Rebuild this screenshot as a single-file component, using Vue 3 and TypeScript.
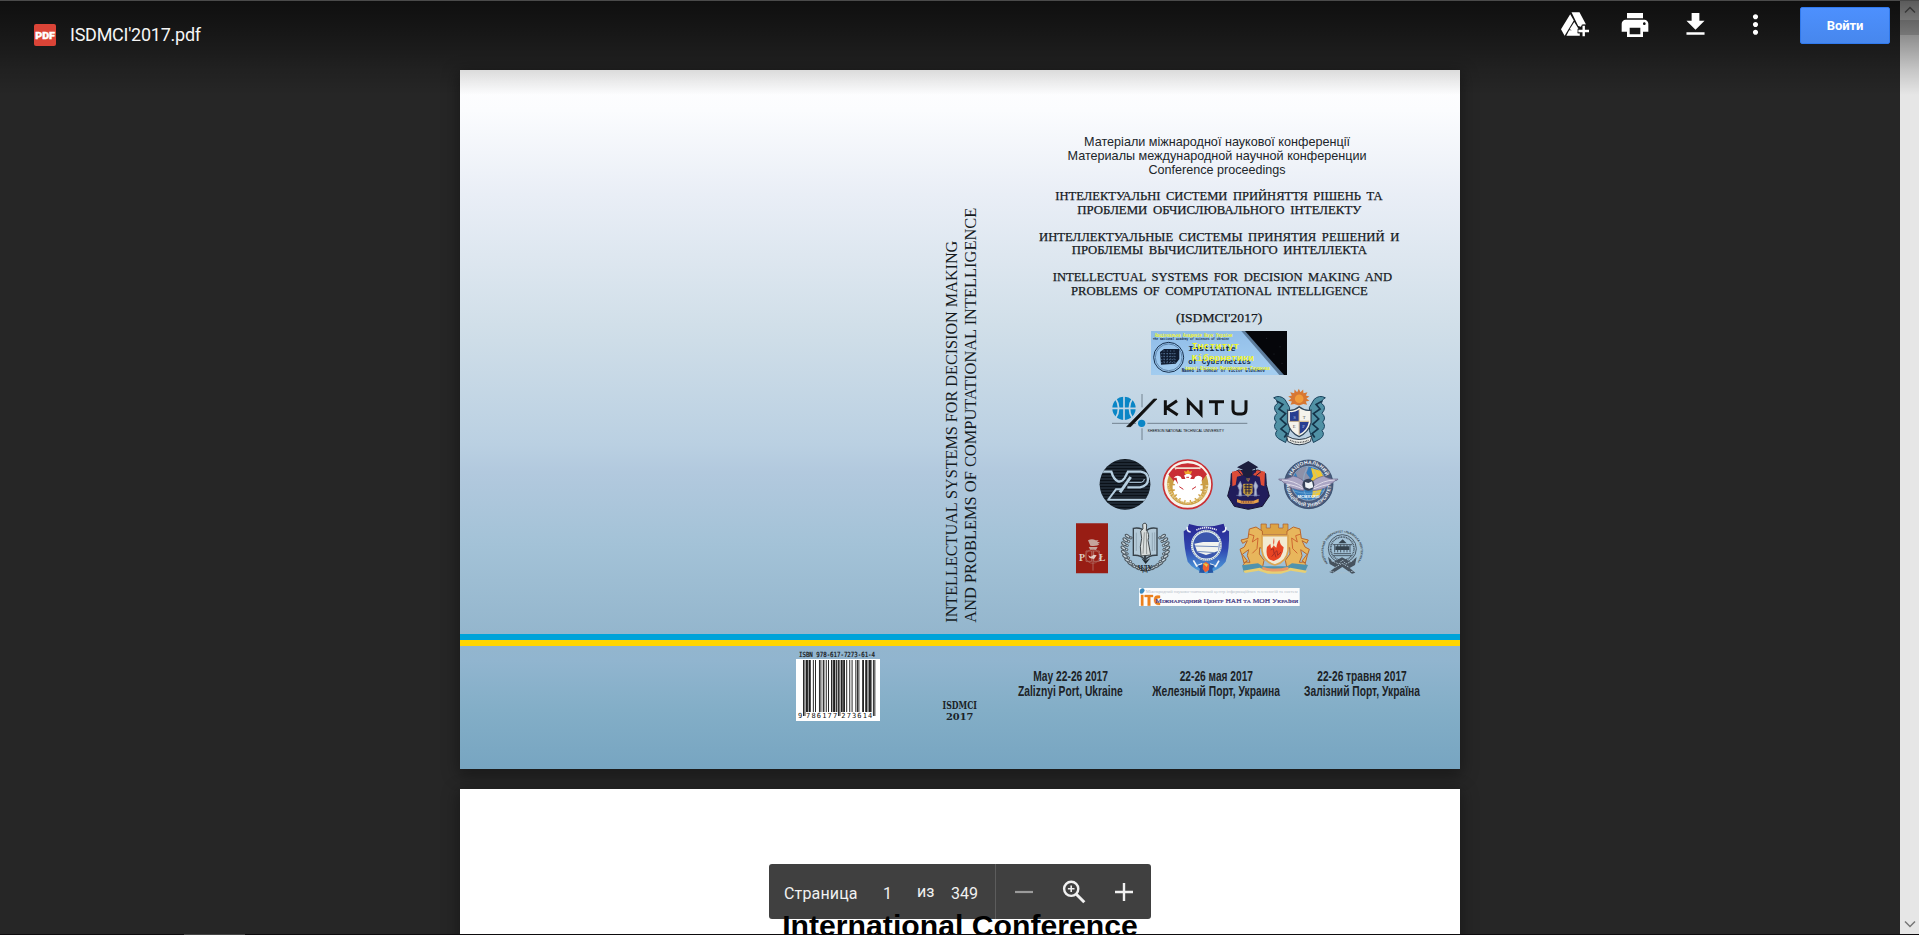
<script setup lang="ts">
interface Line { t: string; x: number; w: number; y: number }

const subtitle: Line[] = [
  { t: 'Матеріали міжнародної наукової конференції', x: 1084, w: 266, y: 146.2 },
  { t: 'Материалы международной научной конференции', x: 1067.5, w: 299, y: 160.2 },
  { t: 'Conference proceedings', x: 1148.5, w: 137, y: 174.2 },
]
const titles: Line[] = [
  { t: 'ІНТЕЛЕКТУАЛЬНІ СИСТЕМИ ПРИЙНЯТТЯ РІШЕНЬ ТА', x: 1055.3, w: 327.4, y: 200.2 },
  { t: 'ПРОБЛЕМИ ОБЧИСЛЮВАЛЬНОГО ІНТЕЛЕКТУ', x: 1077.3, w: 284, y: 213.7 },
  { t: 'ИНТЕЛЛЕКТУАЛЬНЫЕ СИСТЕМЫ ПРИНЯТИЯ РЕШЕНИЙ И', x: 1039, w: 360.3, y: 240.7 },
  { t: 'ПРОБЛЕМЫ ВЫЧИСЛИТЕЛЬНОГО ИНТЕЛЛЕКТА', x: 1071.7, w: 295.3, y: 254 },
  { t: 'INTELLECTUAL SYSTEMS FOR DECISION MAKING AND', x: 1052.7, w: 339.3, y: 281 },
  { t: 'PROBLEMS OF COMPUTATIONAL INTELLIGENCE', x: 1071, w: 296.7, y: 294.5 },
  { t: "(ISDMCI'2017)", x: 1176, w: 86.3, y: 321.5 },
]
const dates: Line[] = [
  { t: 'May 22-26 2017', x: 1033.3, w: 74.7, y: 680.7 },
  { t: 'Zaliznyi Port, Ukraine', x: 1018, w: 104.7, y: 696 },
  { t: '22-26 мая 2017', x: 1179.7, w: 73.3, y: 680.7 },
  { t: 'Железный Порт, Украина', x: 1152.3, w: 127.7, y: 696 },
  { t: '22-26 травня 2017', x: 1317.3, w: 89.4, y: 680.7 },
  { t: 'Залізний Порт, Україна', x: 1304, w: 116, y: 696 },
]

// EAN-13 encoding of the ISBN
const isbn = '9786177273614'
const L = ['0001101', '0011001', '0010011', '0111101', '0100011', '0110001', '0101111', '0111011', '0110111', '0001011']
const right = (d: number) => L[d].replace(/[01]/g, c => (c === '0' ? '1' : '0'))
const even = (d: number) => right(d).split('').reverse().join('')
const parity = 'OEEOEO'
const digits = isbn.split('').map(Number)
const modules = '101'
  + digits.slice(1, 7).map((d, i) => (parity[i] === 'O' ? L[d] : even(d))).join('')
  + '01010'
  + digits.slice(7).map(right).join('')
  + '101'
const bars: { x: number; h: number }[] = []
modules.split('').forEach((m, i) => {
  if (m === '1') bars.push({ x: 7 + i * 0.76, h: i < 3 || i > 91 || (i > 44 && i < 50) ? 56 : 52 })
})
const gearTeeth = Array.from({ length: 16 }, (_, i) => i * 22.5)
const leaves = Array.from({ length: 11 }, (_, i) => {
  const a = Math.PI * (0.55 + i * 0.065)
  return { x: 256 + Math.cos(a) * 66, y: 115 + Math.sin(a) * 62, m: 256 - Math.cos(a) * 66 }
})
const stripes = Array.from({ length: 17 }, (_, i) => 48 + i * 9)
</script>

<template>
  <div class="viewer">
    <main class="pages">
      <article class="page cover">
        <section class="upper">
          <div class="back"></div>
          <svg class="spine" viewBox="920 70 80 564">
            <text transform="translate(957 622.7) rotate(-90)" textLength="382" lengthAdjust="spacingAndGlyphs">INTELLECTUAL SYSTEMS FOR DECISION MAKING</text>
            <text transform="translate(975.7 622.7) rotate(-90)" textLength="415" lengthAdjust="spacingAndGlyphs">AND PROBLEMS OF COMPUTATIONAL INTELLIGENCE</text>
          </svg>
          <div class="front">
            <svg class="heading" viewBox="1000 70 460 261">
              <text v-for="l in subtitle" :key="l.t" class="sub" :x="l.x" :y="l.y" :textLength="l.w" lengthAdjust="spacingAndGlyphs">{{ l.t }}</text>
              <text v-for="l in titles" :key="l.t" class="ttl" :x="l.x" :y="l.y" :textLength="l.w" lengthAdjust="spacingAndGlyphs">{{ l.t }}</text>
            </svg>

            <svg class="banner" viewBox="213 33 408 132">
              <defs><linearGradient id="sky" x1="0" y1="0" x2="0.25" y2="1"><stop offset="0" stop-color="#8fbce8" /><stop offset="1" stop-color="#a3cdf0" /></linearGradient></defs>
              <path fill="url(#sky)" d="M213 33h408v132H213z" />
              <path fill="#5c7c9c" d="M484 33h20l112 132h-18z" />
              <path fill="#05060a" d="M495 33H621V165H612z" />
              <g fill="#2b3038"><circle cx="560" cy="55" r="1.5" /><circle cx="600" cy="80" r="1.5" /><circle cx="582" cy="102" r="1.5" /><circle cx="606" cy="130" r="1.5" /></g>
              <circle cx="266" cy="112" r="45" fill="none" stroke="#17304e" stroke-width="3" />
              <circle cx="266" cy="112" r="40" fill="none" stroke="#41658c" stroke-width="2" />
              <path fill="#101c30" d="M240 96l12-9h46v30l-11 14-44 3z" />
              <path d="M243 101h48M243 110h48M243 119h48M243 128h44M252 91v40M262 91v40M272 91v40M282 91v40" stroke="#6387ab" stroke-width="2" stroke-dasharray="4 4" />
              <g class="mono">
                <text x="219" y="60" textLength="228" lengthAdjust="spacingAndGlyphs" font-size="12">The National Academy of Sciences of Ukraine</text>
                <text x="325" y="94" textLength="142" lengthAdjust="spacingAndGlyphs" font-size="24">Institute</text>
                <text x="325" y="131" textLength="188" lengthAdjust="spacingAndGlyphs" font-size="24">of Cybernetics</text>
                <text x="305" y="157" textLength="250" lengthAdjust="spacingAndGlyphs" font-size="14">Named in honour of Victor Glushkov</text>
              </g>
              <g class="mono yellow">
                <text x="225" y="52" textLength="232" lengthAdjust="spacingAndGlyphs" font-size="16">Національна Академія Наук України</text>
                <text x="335" y="87" textLength="143" lengthAdjust="spacingAndGlyphs" font-size="26">Інститут</text>
                <text x="335" y="122" textLength="187" lengthAdjust="spacingAndGlyphs" font-size="26">Кібернетики</text>
                <text x="315" y="150" textLength="255" lengthAdjust="spacingAndGlyphs" font-size="16">імені Віктора Михайловича Глушкова</text>
              </g>
            </svg>

            <div class="row row-a">
              <svg class="kntu" viewBox="96 219 408 144">
                <circle cx="132" cy="265" r="35" fill="#0a86c6" />
                <path d="M132 228v74M95 265h74M106 234q20 31 0 62M158 234q-20 31 0 62" fill="none" stroke="#c3d6e5" stroke-width="5" />
                <path d="M186 222v40M186 325v35M96 310h72M202 310h300" stroke="#4c5b68" stroke-width="2" fill="none" />
                <path d="M140 320L221 237h10L152 320z" fill="#111" stroke="#111" stroke-width="2" />
                <circle cx="185" cy="310" r="11" fill="#0a86c6" />
                <path d="M256 241v44M291 242l-31 21 33 22M325 285v-42l38 40v-42M387 245h45M409 245v40M459 241v27q0 14 14 14h12q13 0 13-14v-27" fill="none" stroke="#111" stroke-width="9" />
                <text x="203" y="336" font-size="13" textLength="229" lengthAdjust="spacingAndGlyphs" class="sans">KHERSON NATIONAL TECHNICAL UNIVERSITY</text>
              </svg>
              <svg class="crest" viewBox="578 204 160 174">
                <path d="M580 233q18-10 34 5l14 24v70l-12 36-22-12q-14-12-4-24-14-12-2-26-12-12 2-26-16-20 2-30-2-14-12-17zM736 233q-18-10-34 5l-14 24v70l12 36 22-12q14-12 4-24 14-12 2-26 12-12-2-26 16-20-2-30 2-14 12-17z" fill="#5091a5" stroke="#17405a" stroke-width="3" />
                <path d="M590 243l18 10-12 14 20 14-16 16 18 16-16 14 18 14-8 12M726 243l-18 10 12 14-20 14 16 16-18 16 16 14-18 14 8 12" fill="none" stroke="#143349" stroke-width="5" />
                <path d="M656 206l5 10 8-8 1 11 12-3-5 10 11 3-9 6 9 7-11 2 4 10-11-2-14 4-14-4-11 2 4-10-11-2 9-7-9-6 11-3-5-10 12 3 1-11 8 8z" fill="#d77733" />
                <circle cx="657" cy="236" r="13" fill="#f09b3c" />
                <path d="M622 270q18 4 35-10 17 14 36 10v38q-8 30-36 42-28-12-35-42z" fill="#f5f3ec" stroke="#30465b" stroke-width="4" />
                <path d="M629 276q14 2 27-7v35h-27zM658 306h28q-5 26-28 36z" fill="#273d91" />
                <path d="M657 267v78M627 304h60" stroke="#bb9557" stroke-width="2" />
                <g class="seriflogo" font-size="14" text-anchor="middle"><text x="643" y="297" fill="#bac8e8">S</text><text x="672" y="297" fill="#555">T</text><text x="642" y="325" fill="#555">E</text><text x="670" y="325" fill="#bac8e8">P</text></g>
                <path d="M619 348q38 22 76 0l-4 17q-34 20-68 0z" fill="#ebece8" stroke="#293746" stroke-width="3" />
                <path d="M630 361q27 13 55 0" fill="none" stroke="#555" stroke-width="4" stroke-dasharray="3 2" />
              </svg>
            </div>

            <div class="row row-b">
              <svg class="up" viewBox="57 42 156 153">
                <clipPath id="disc"><circle cx="135" cy="118" r="76" /></clipPath>
                <g clip-path="url(#disc)">
                  <path fill="#0b1118" d="M57 42h156v153H57z" />
                  <path v-for="s in stripes" :key="s" :d="`M57 ${s}h156`" stroke="#46596a" stroke-width="2" />
                  <g fill="none" stroke="#b5cee0">
                    <path d="M57 80h37q7 24 20 29 12 3 20-10l10-19h38q22 3 22 23t-24 24h-38" stroke-width="7" />
                    <path d="M152 96l-32 46" stroke-width="9" />
                    <path d="M148 112h36q9-2 9-10" stroke-width="3" />
                    <path d="M82 164h116M126 133l-18 0-24 32" stroke-width="6" />
                  </g>
                </g>
              </svg>
              <svg class="lublin" viewBox="245 42 156 153">
                <defs><path id="lub" d="M258 112a64 64 0 0 0 128 0" /></defs>
                <circle cx="322" cy="118" r="73" fill="#f7f4ed" stroke="#ca3034" stroke-width="5" />
                <circle cx="322" cy="118" r="62" fill="#cb9e45" />
                <path d="M264 88q20-33 58-33t58 33l-16 20h-84z" fill="#c92e35" />
                <path d="M281 67h82l-8 12h-66z" fill="#eedfd2" />
                <g fill="#fff"><circle cx="322" cy="127" r="39" /><path v-for="g in gearTeeth" :key="g" d="M316 82h12v12h-12z" :transform="`rotate(${g} 322 127)`" /></g>
                <path d="M288 72h70l8 24-14 20-12-14h-36l-12 14-12-20z" fill="#c92e35" />
                <path d="M280 98q9-10 21-3 7 15 13 22 3-19-3-25 12-12 24 1-8 8-5 24 9-8 15-22 12-7 21 3-4 26-16 27 4 14-8 16l-9 21-9-19q-9 4-14-4-14-5-10-14-9-8-11-27z" fill="#fff" />
                <path d="M297 125l12 8M347 125l-12 8M318 97h8" stroke="#c92e35" stroke-width="3" />
                <path d="M314 87l-3-10 7 3 5-6 5 6 7-3-3 10z" fill="#eea72c" />
                <text font-size="13" class="seriflogo" fill="#fff4cf"><textPath href="#lub" startOffset="2" textLength="192">POLITECHNIKA LUBELSKA</textPath></text>
              </svg>
              <svg class="mantle" viewBox="441 42 129 153">
                <path d="M454 86l22-11 28 5 30-5 23 11 2 33 9 34-21 31-42 9-42-9-20-31 9-34z" fill="#211d5b" stroke="#151330" stroke-width="3" />
                <path d="M456 80l25-4 10 14-20 5-4 25-10 4zM555 80l-24-4-12 14 20 5 4 25 10 4z" fill="#dd4c37" />
                <path d="M471 67l34-19 30 19-18 7v18l-14 6-15-7V74z" fill="#1c1e3d" />
                <path d="M526 69v14M475 78l12 15M528 92l15-12" stroke="#1b1f3c" stroke-width="3" />
                <path d="M490 117h27v27l-13 11-14-11z" fill="#bf9634" stroke="#e1c878" />
                <path d="M493 122h22M493 130h22M496 138h17M498 117v30M507 117v30" stroke="#272044" stroke-width="3" />
                <path d="M481 109l5 13-3 13 2 18h-9l2-18-5-12zM526 109l-5 13 3 13-2 18h9l-2-18 5-12zM469 151h70" fill="#b1b8cf" stroke="#7f8db9" stroke-width="2" />
                <text x="504" y="111" text-anchor="middle" fill="#dcae39" font-size="15">Ψ</text>
                <path d="M471 162l14 5h36l15-6v11l-15 4h-36l-14-4z" fill="#e6a049" />
                <path d="M484 171h36" stroke="#874a36" stroke-width="4" stroke-dasharray="3 2" />
              </svg>
              <svg class="nau" viewBox="594 42 183 153">
                <defs><path id="nt" d="M631 112a55 55 0 0 1 110 0" /><path id="nb" d="M619 118a67 67 0 0 0 134 0" /></defs>
                <circle cx="686" cy="118" r="73" fill="#495b7c" stroke="#263c5c" stroke-width="2" />
                <circle cx="686" cy="115" r="51" fill="#347cbd" stroke="#aebfd3" stroke-width="2" />
                <path d="M647 83q20-21 39-16l-7 17 11 15-12 9-23-4z" fill="#8d91a8" />
                <path d="M693 69l28 8 15 28-17 45-23 9 3-28-12-20 12-17z" fill="#f1c834" />
                <path d="M635 117q50 18 102 0M638 137q46 16 96 0M683 65q-28 50 0 100M697 65q34 50 0 100" fill="none" stroke="#8fc0e2" stroke-width="1.5" />
                <path d="M596 102q28 2 43-9 30 7 37 23l-5 21q-42-4-51-20-11-3-15-10-7 1-9-5zM774 102q-28 2-43-9-30 7-37 23l5 21q42-4 51-20 11-3 15-10 7 1 9-5z" fill="#aaa5c4" stroke="#666385" stroke-width="2" />
                <path d="M606 105q35 1 65 23M764 105q-35 1-65 23M620 117q25 4 48 14M752 117q-25 4-50 14" stroke="#dedbe9" stroke-width="3" fill="none" />
                <circle cx="685" cy="119" r="18" fill="#37425a" /><path d="M675 111l10 3 11-5 4 18-12 4-12-4z" fill="#eef3f7" />
                <g class="sans bold"><text x="653" y="158" font-size="12" fill="#fff" textLength="65">МСМХХХІІІ</text>
                  <text fill="#eef3f7" font-size="15"><textPath href="#nt" startOffset="20" textLength="133">НАЦІОНАЛЬНИЙ</textPath></text>
                  <text fill="#eef3f7" font-size="14"><textPath href="#nb" textLength="206">АВІАЦІЙНИЙ УНІВЕРСИТЕТ</textPath></text></g>
              </svg>
            </div>

            <div class="row row-c">
              <svg class="lodz" viewBox="48 39 96 153">
                <path fill="#981d14" d="M48 40h96v150H48z" />
                <path d="M84 91q12-6 23 0h9l-5 5h9l-7 5h6q-7 9-28 6zM86 111h27l-5 9H91z" fill="#c5a49b" />
                <path d="M78 123h17v31H78zM101 123h17v31h-17zM99 116v66" fill="none" stroke="#bb837a" stroke-width="2" />
                <circle cx="98" cy="139" r="21" fill="none" stroke="#ad6c63" stroke-width="2" />
                <path d="M84 136l9 4 8-6 9 2-8 11-13-3z" fill="#e1cac3" />
                <g class="seriflogo bold" font-size="31" fill="#ddd0c8"><text x="57" y="152" textLength="18" lengthAdjust="spacingAndGlyphs">P</text><text x="117" y="152" textLength="19" lengthAdjust="spacingAndGlyphs">Ł</text></g>
              </svg>
              <svg class="chdu" viewBox="180 39 153 153">
                <g fill="#c6d3db" stroke="#4b565e" stroke-width="3"><template v-for="l in leaves" :key="l.x"><ellipse :cx="l.x" :cy="l.y" rx="8" ry="4" :transform="`rotate(35 ${l.x} ${l.y})`" /><ellipse :cx="l.m" :cy="l.y" rx="8" ry="4" :transform="`rotate(-35 ${l.m} ${l.y})`" /><circle :cx="l.x + 10" :cy="l.y + 5" r="3.5" /><circle :cx="l.m - 10" :cy="l.y + 5" r="3.5" /></template></g>
                <path d="M220 55q24-4 34 10v84q-12-15-34-13zM291 55q-24-4-34 10v84q12-15 34-13z" fill="#b4cad8" stroke="#374149" stroke-width="4" />
                <path d="M277 68v55M284 67v55M229 68v55" stroke="#8499a8" stroke-width="2" />
                <path d="M248 43q9-8 12 2l-1 16q11 11 5 30l8 44-29 3-2-28 4-25-3-22 7-6z" fill="#d9dedd" stroke="#41484b" stroke-width="3" />
                <path d="M253 67l-4 64M259 66l1 66" stroke="#6e7371" stroke-width="2" />
                <path d="M244 145l13 17 14-17-14 7z" fill="#222b31" />
                <text x="233" y="184" font-size="22" class="seriflogo bold" textLength="45" fill="#222c35">ЧДУ</text>
              </svg>
              <svg class="shield" viewBox="368 39 141 153">
                <defs><linearGradient id="sh" x1="0" y1="0" x2="0" y2="1"><stop offset="0" stop-color="#292792" /><stop offset="0.5" stop-color="#2f45b0" /><stop offset="1" stop-color="#51a7e0" /></linearGradient></defs>
                <path d="M386 42q51 16 104-1 3 17 16 23 2 54-10 91-18 25-57 36-39-11-57-36-11-38-12-91 13-7 16-22z" fill="url(#sh)" />
                <circle cx="438" cy="106" r="43" fill="#3a56ad" stroke="#dfebf1" stroke-width="7" />
                <circle cx="438" cy="106" r="44" fill="none" stroke="#596b83" stroke-width="3" stroke-dasharray="3 3" />
                <path d="M402 101l26-5h48l-2 27-37 12-26-9z" fill="#f2f3ef" />
                <path d="M404 108l70 2M409 124l55 4" stroke="#718cbe" stroke-width="3" />
                <path d="M408 60q30-14 61 0" stroke="#e6e8f2" stroke-width="5" fill="none" stroke-dasharray="4 2" />
                <path d="M381 51q-3 14 10 15M496 51q3 14-10 15M399 151l10 17 17-7M476 152l-10 17-17-7" stroke="#f1f5f9" stroke-width="5" fill="none" />
                <path d="M411 167l18-5 4 27-17-1 3-12zM464 167l-18-5-4 27 17-1-3-12z" fill="#2556a5" />
                <path d="M436 155l11 8-1 17-11 7-8-10 1-15z" fill="#ed6132" /><path d="M427 159l16 3-4 9z" fill="#e6c948" />
              </svg>
              <svg class="lions" viewBox="543 39 204 153">
                <path d="M603 42h16v12h12V42h25v12h13V42h15v32h-81z" fill="#dda344" stroke="#a75b31" stroke-width="2" />
                <path id="lion" d="M568 57l20-6 19 12 1 26 8 8-2 20-15-4-1 19 14 19-4 19-43 4-15-10 6-8 14 1-8-20 4-18-19 14 15 20-10 6-6-23-6-18 13-7 9-19-14 8-5-10 21-5z" fill="#e8b65c" stroke="#b9672c" stroke-width="3" />
                <use href="#lion" transform="translate(1288 0) scale(-1 1)" />
                <path d="M566 72l16 5-5 19 17-12-3 32-14 14M723 72l-16 5 5 19-17-12 3 32 14 14" fill="none" stroke="#ce6731" stroke-width="3" />
                <path d="M606 77h78v45q-4 34-39 43-35-9-39-43z" fill="#f2ead2" stroke="#dca550" stroke-width="5" />
                <path d="M642 83q-7 23 7 30 3-20 10-24-1 15 12 23-3 35-30 41-27-5-20-42l10-10 2 14q13-8 9-32z" fill="#e84423" />
                <path d="M632 120l8-4 2 14 9-8 2 14 10-10M635 140l9-11 4 13" fill="none" stroke="#a92e25" stroke-width="3" />
                <path d="M546 166l48-6 14 9h74l14-9 48 5-9 21-49-6-27 8h-35l-31-8-42 7z" fill="#4f93ae" />
                <path d="M549 182l50-9 20 8h50l22-8 50 9-5 7-44-7-29 9h-39l-28-9-41 7z" fill="#e8cf72" />
                <path d="M607 170q37 11 78 0v9q-40 11-78 0z" fill="#e89a66" />
              </svg>
              <svg class="seal" viewBox="783 39 126 153">
                <defs><path id="st" d="M804 160a56 56 0 1 1 85 0" /></defs>
                <text class="sans bold" font-size="9" fill="#303a43"><textPath href="#st" textLength="250" lengthAdjust="spacingAndGlyphs">НАЦІОНАЛЬНИЙ УНІВЕРСИТЕТ «ЛЬВІВСЬКА ПОЛІТЕХНІКА»</textPath></text>
                <g fill="none" stroke="#4a5966" stroke-width="3"><circle cx="847" cy="116" r="42" /><circle cx="847" cy="116" r="35" stroke-dasharray="3 2" stroke-width="5" /><path d="M818 104h58M824 102v25M833 102v25M842 102v25M852 102v25M861 102v25M870 102v25M821 131h52M819 137h56" /></g>
                <path d="M835 100l13-12 12 12zM826 109h42v11h-42z" fill="#35434e" />
                <path d="M804 140l16 16 26-14 27 14 17-15-5 24-16 9 17 14-10 3-29-20-29 19-10-4 18-14-17-10z" fill="#46525e" />
                <path d="M814 152l23 10 10-12 11 12 22-11M810 183q37 12 76-2M826 172l20-12 22 12" fill="none" stroke="#aabfcd" stroke-width="3" stroke-dasharray="5 3" />
              </svg>
            </div>

            <svg class="itc" viewBox="237 234 482 54">
              <path fill="#fafbfc" d="M237 234h482v54H237z" />
              <path d="M240 239q12-10 14 3l-5 8q-13 5-9-11z" fill="#3a8bbf" />
              <text x="257" y="248" font-size="13" class="seriflogo" fill="#b6bfcb" textLength="456" lengthAdjust="spacingAndGlyphs">Міжнародний науково-навчальний центр інформаційних технологій та систем</text>
              <path d="M243 255h7v32h-7zM254 255h25v6h-8v26h-8v-26h-9zM300 257q-9-2-14 1-5 4-4 13 0 15 18 14v-6q-10 1-10-8 0-8 10-7z" fill="#eb811d" stroke="#eb811d" />
              <text x="286" y="279" font-size="19" class="seriflogo itcname" fill="#423782" textLength="429" lengthAdjust="spacingAndGlyphs">М<tspan font-size="15">ІЖНАРОДНИЙ</tspan> Ц<tspan font-size="15">ЕНТР</tspan> НАН <tspan font-size="15">ТА</tspan> МОН У<tspan font-size="15">КРАЇНИ</tspan></text>
            </svg>
          </div>
        </section>
        <div class="flag"><i></i><i></i></div>
        <section class="lower">
          <div class="barcode-cell">
            <svg class="barcode" viewBox="0 0 84 75">
              <text x="3" y="10.7" font-size="7" textLength="76" lengthAdjust="spacingAndGlyphs" class="ocr isbn">ISBN 978-617-7273-61-4</text>
              <path fill="#fff" d="M0 13h84v62H0z" />
              <rect v-for="b in bars" :key="b.x" :x="b.x" y="14" width="0.84" :height="b.h" fill="#000" />
              <text v-for="(d, i) in isbn" :key="i" class="ocr" font-size="7" :x="i === 0 ? 2 : i < 7 ? 10 + (i - 1) * 5.4 : 45.3 + (i - 7) * 5.35" y="71.6">{{ d }}</text>
            </svg>
          </div>
          <svg class="spine-foot" viewBox="920 646 80 123">
            <text x="942.5" y="708.7" textLength="34.5" lengthAdjust="spacingAndGlyphs" font-size="10.5">ISDMCI</text>
            <text x="946" y="720.4" textLength="27.5" lengthAdjust="spacingAndGlyphs" font-size="10">2017</text>
          </svg>
          <svg class="dates" viewBox="1000 646 460 123">
            <text v-for="l in dates" :key="l.t" :x="l.x" :y="l.y" :textLength="l.w" lengthAdjust="spacingAndGlyphs">{{ l.t }}</text>
          </svg>
        </section>
      </article>
      <article class="page second"><h1>International Conference</h1></article>
    </main>

    <aside class="scrollbar">
      <svg viewBox="0 0 19 20"><path d="M5 12.5l5-5 5 5" /></svg>
      <div class="thumb"></div>
      <svg class="down" viewBox="0 0 19 20"><path d="M5 7.5l5 5 5-5" /></svg>
    </aside>

    <header class="top">
      <svg class="pdf" viewBox="0 0 22 22"><rect width="22" height="22" rx="2" fill="#db4437" /><text x="1.2" y="14.6" textLength="19.8" lengthAdjust="spacingAndGlyphs">PDF</text></svg>
      <span class="name">ISDMCI'2017.pdf</span>
      <nav class="actions">
        <button aria-label="drive"><svg viewBox="0 0 28 25"><path d="M9.2 2.2L0 17.3l3.6 6.4L12.8 8.4zM10.5 .2h8L25 12.5h-3.4l-1.8 2.3-2.6-.9zM8.6 17.3L13.3 10l4 6.4v3.4h-3zM8.2 18.3h8.6v3h2v2.4H5.4z" fill="#fff" /><path d="M23 12.8V24.2M16.6 19H28" stroke="#171717" stroke-width="4.6" /><path d="M22.7 13.8V24.2M17.4 19H28" stroke="#fff" stroke-width="2.4" /></svg></button>
        <button aria-label="print"><svg class="i32" viewBox="0 0 24 24"><path fill="#fff" d="M19 8H5c-1.66 0-3 1.34-3 3v6h4v4h12v-4h4v-6c0-1.66-1.34-3-3-3zm-3 11H8v-5h8v5zm3-7c-.55 0-1-.45-1-1s.45-1 1-1 1 .45 1 1-.45 1-1 1zm-1-9H6v4h12V3z" /></svg></button>
        <button aria-label="download"><svg class="i31" viewBox="0 0 24 24"><path fill="#fff" d="M19 9h-4V3H9v6H5l7 7 7-7zM5 18v2h14v-2H5z" /></svg></button>
        <button aria-label="more"><svg class="i31" viewBox="0 0 24 24"><path fill="#fff" d="M12 8c1.1 0 2-.9 2-2s-.9-2-2-2-2 .9-2 2 .9 2 2 2zm0 2c-1.1 0-2 .9-2 2s.9 2 2 2 2-.9 2-2-.9-2-2-2zm0 6c-1.1 0-2 .9-2 2s.9 2 2 2 2-.9 2-2-.9-2-2-2z" /></svg></button>
        <button class="signin">Войти</button>
      </nav>
    </header>

    <div class="toolbar">
      <div class="pager"><span class="w1">Страница</span><span class="w2">1</span><span class="w3">из</span><span class="w4">349</span></div>
      <div class="zoom">
        <svg viewBox="0 0 28 28"><path d="M5 14h18" stroke="#9b9b9b" stroke-width="2.2" /></svg>
        <svg viewBox="0 0 28 28" fill="none" stroke="#f1f1f1"><circle cx="11.2" cy="10.8" r="7.1" stroke-width="2.4" /><path d="M16.3 16.2l8 8" stroke-width="3" /><path d="M11.2 7.5v6.6M7.9 10.8h6.6" stroke-width="1.6" /></svg>
        <svg viewBox="0 0 28 28"><path d="M5 14h18M14 5v18" stroke="#f1f1f1" stroke-width="2.4" /></svg>
      </div>
    </div>
    <div class="edge-top"></div>
    <div class="edge-bottom"><i></i></div>
  </div>
</template>

<style>
body { margin: 0; background: #262626; overflow: hidden; }
</style>
<style scoped>
* { box-sizing: border-box; }
.viewer { position: relative; width: 1919px; height: 935px; overflow: hidden; background: #262626; font-family: Roboto, "Liberation Sans", sans-serif; }
.pages { display: flex; flex-direction: column; gap: 20px; padding: 70px 0 0 460px; }
.page { width: 1000px; box-shadow: 0 4px 15px 2px rgba(0, 0, 0, .35); flex: none; }
.cover { height: 699px; display: flex; flex-direction: column; background: linear-gradient(#fff 0, #fbfcfe 40px, #e9eef6 125px, #d1dfe9 255px, #bad0e2 375px, #b2c9de 402px, #a3c2d7 475px, #94b6cd 563px, #91b5cf 590px, #83aec7 640px, #77a5c1 699px); }
.upper { height: 564px; display: flex; }
.back { width: 460px; }
.spine { width: 80px; height: 564px; }
.spine text { font: 17.6px "Liberation Serif", serif; fill: #141a1d; }
.front { width: 460px; }
.front > svg { display: block; }
.heading { width: 460px; height: 261px; }
.sub { font: 13.1px "Liberation Sans", Arial, sans-serif; fill: #20252a; }
.ttl { font: 13.2px "Liberation Serif", serif; word-spacing: 2.5px; fill: #15191d; stroke: #15191d; stroke-width: .25px; }
.banner { width: 136px; height: 44px; margin-left: 151px; }
svg { overflow: visible; }
.mono { font-family: "Liberation Mono", monospace; font-weight: bold; fill: #10294d; }
.yellow { fill: #f2f52a; }
.sans { font-family: "Liberation Sans", sans-serif; }
.seriflogo { font-family: "Liberation Serif", serif; }
.bold { font-weight: bold; }
.itcname { stroke: #423782; stroke-width: .6px; }
.row { display: flex; align-items: flex-start; }
.row svg { flex: none; display: block; }
.row-a { padding: 13px 0 0 112px; height: 84px; }
.kntu { width: 136px; height: 48px; margin: 5px 25px 0 0; }
.crest { width: 53px; height: 58px; }
.row-b { height: 64px; padding-left: 99px; }
.up { width: 52px; height: 51px; margin-right: 10.7px; }
.lublin { width: 52px; height: 51px; margin-right: 13.3px; }
.mantle { width: 43px; height: 51px; margin-right: 8px; }
.nau { width: 61px; height: 51px; }
.row-c { height: 65px; padding-left: 76px; }
.lodz { width: 32px; height: 51px; margin-right: 12px; }
.chdu { width: 51px; height: 51px; margin-right: 11.7px; }
.shield { width: 47px; height: 51px; margin-right: 11.3px; }
.lions { width: 68px; height: 51px; margin-right: 12px; }
.seal { width: 42px; height: 51px; }
.itc { width: 160.7px; height: 18px; margin-left: 139px; }
.flag { height: 12px; display: flex; flex-direction: column; }
.flag i { flex: 1; background: #00a3d9; }
.flag i + i { background: #ffd500; }
.lower { height: 123px; display: flex; }
.barcode-cell { width: 460px; padding-left: 336px; }
.barcode { width: 84px; height: 75px; display: block; }
.ocr { font-family: "DejaVu Sans Mono", monospace; fill: #111; }
.isbn { stroke: #111; stroke-width: .2px; }
.spine-foot { width: 80px; height: 123px; }
.spine-foot text { font-family: "DejaVu Serif", serif; font-weight: bold; fill: #1b2227; }
.dates { width: 460px; height: 123px; }
.dates text { font: bold 15.2px "Liberation Sans", Arial, sans-serif; fill: #1d2327; }
.second { height: 400px; background: #fff; }
.second h1 { margin: 0; padding-top: 120px; font: bold 30.2px/34px "Liberation Sans", Arial, sans-serif; text-align: center; color: #000; }
.scrollbar { position: absolute; right: 0; top: 0; width: 19px; height: 934px; background: #e6e6e6; display: flex; flex-direction: column; }
.scrollbar svg { width: 19px; height: 20px; flex: none; fill: none; stroke: #777; stroke-width: 1.5; }
.thumb { height: 15px; background: #c2c2c2; }
.down { margin-top: auto; }
.top { position: absolute; inset: 0 0 auto 0; height: 100px; display: flex; align-items: flex-start; background: linear-gradient(rgba(0,0,0,.61), rgba(0,0,0,.39) 35px, rgba(0,0,0,.14) 70px, rgba(0,0,0,0) 95px); }
.pdf { width: 22px; height: 22px; margin: 24px 14px 0 34px; }
.pdf text { font: 900 9.5px Roboto, sans-serif; fill: #fff; stroke: #fff; stroke-width: .4px; }
.name { margin-top: 23px; font-size: 18px; line-height: 24px; letter-spacing: -.25px; color: #f5f5f5; }
.actions { display: flex; margin: 7px 29px 0 auto; }
button { border: 0; background: none; padding: 0; width: 60px; height: 37px; display: flex; align-items: center; justify-content: center; }
button svg { width: 28px; height: 25px; margin-bottom: 2px; }
button .i32 { width: 32px; height: 32px; }
button .i31 { width: 31px; height: 31px; }
.signin { width: 90px; margin-left: 15px; border: 1px solid #3079ed; border-radius: 2px; background: linear-gradient(#4d90fe, #4787ed); color: #fff; font: bold 13px Roboto, sans-serif; letter-spacing: -.1px; }
.toolbar { position: absolute; left: 769px; top: 864px; width: 382px; height: 55px; border-radius: 3px; background: rgba(0, 0, 0, .75); display: flex; color: #f1f1f1; font-size: 16px; }
.pager { width: 227px; border-right: 1px solid #5c5c5c; padding: 20px 0 0 15px; display: flex; line-height: 20px; }
.w1 { width: 99px; letter-spacing: .15px; }
.w2 { width: 34px; }
.w3 { width: 34px; margin-top: -2px; }
.zoom { display: flex; padding: 14px 0 0 14px; gap: 22px; }
.zoom svg { width: 28px; height: 28px; }
.edge-top { position: absolute; inset: 0 0 auto 0; height: 1px; background: #4a4a4a; }
.edge-bottom { position: absolute; inset: auto 0 0 0; height: 1px; background: #0d0b0d; display: flex; padding-left: 184px; }
.edge-bottom i { width: 61px; background: #444; }
</style>
